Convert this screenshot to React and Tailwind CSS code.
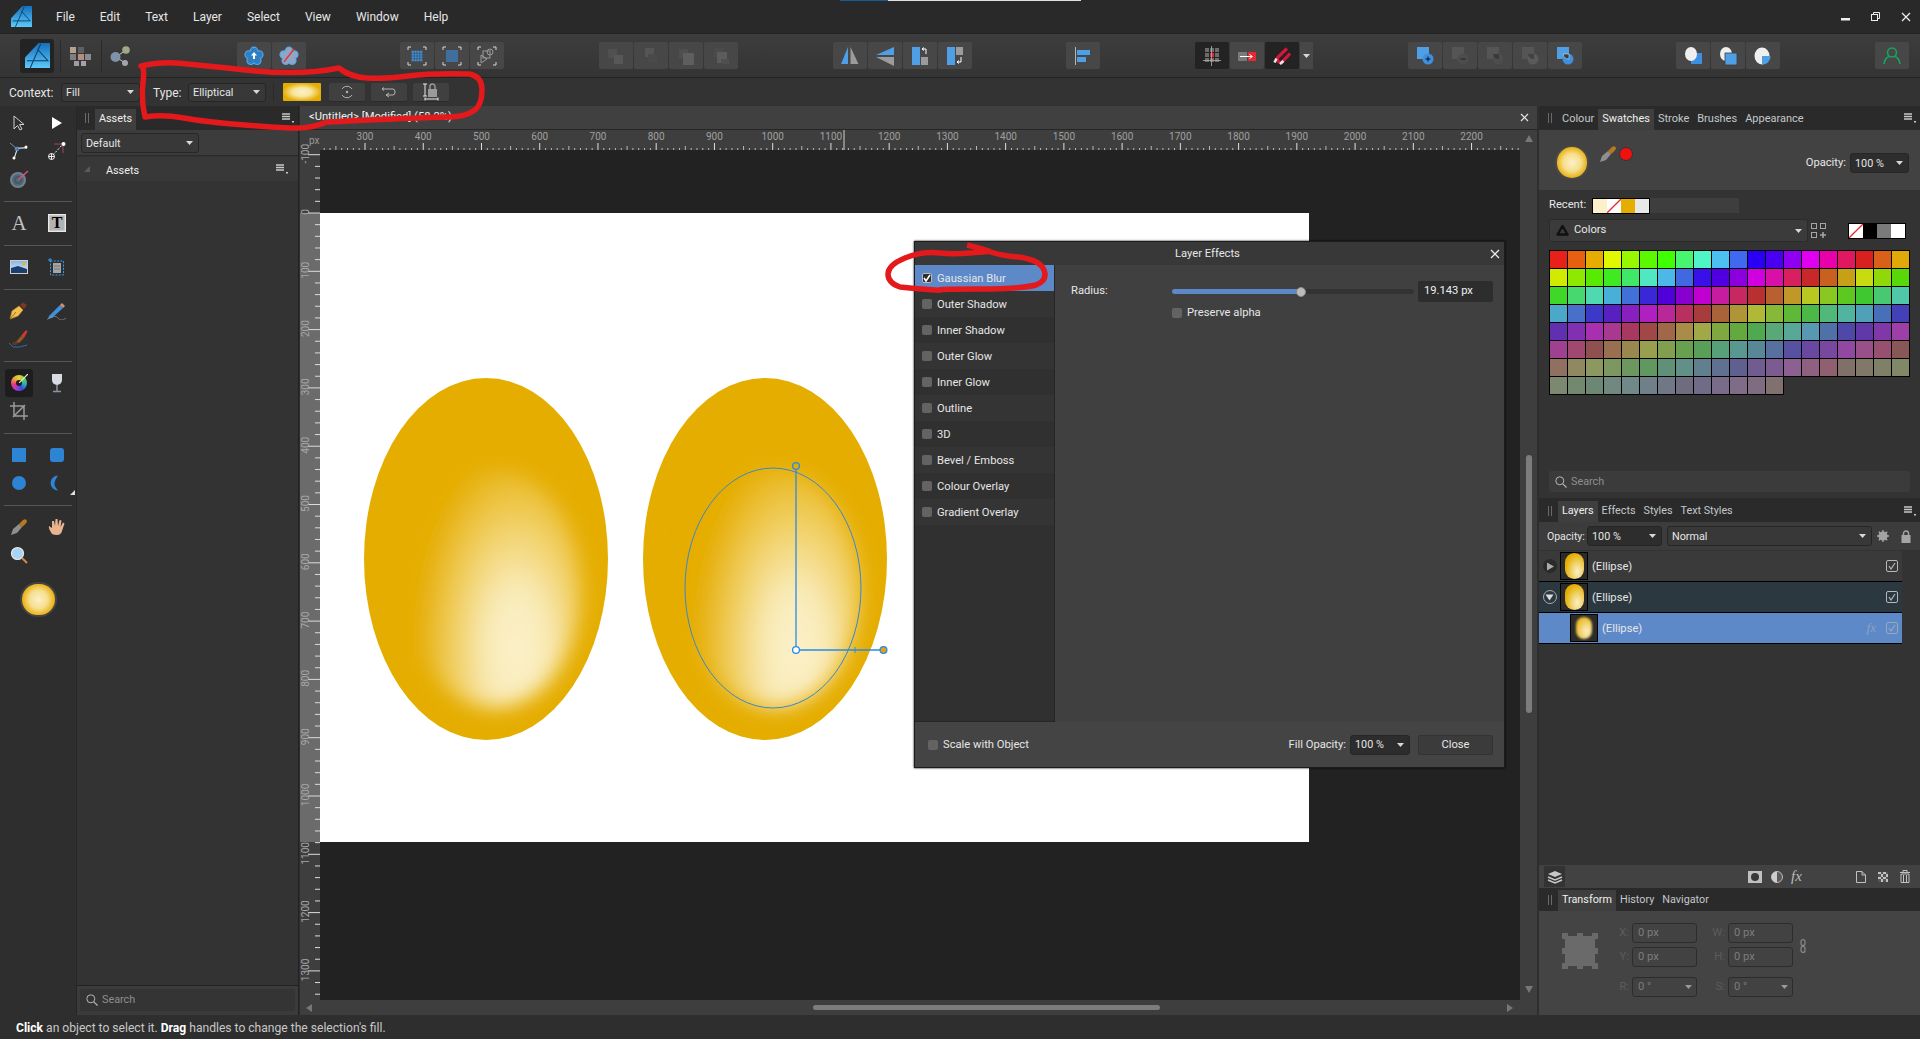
import React from "react";

const FONT = "font-['Roboto','Liberation_Sans',sans-serif]";
const Sv = ({ w = 20, h = 20, vb, children, className = "" }) => (
  <svg width={w} height={h} viewBox={vb || `0 0 ${w} ${h}`} className={"shrink-0 " + className}>{children}</svg>
);

const Caret = ({ c = "#d8d8d8" }) => (
  <Sv w={7} h={4} className="shrink-0"><path d="M0 0H7L3.5 4Z" fill={c} /></Sv>
);
const MenuLines = () => (
  <Sv w={12} h={10}>
    <path d="M0 1H8M0 3.5H8M0 6H8" stroke="#c8c8c8" strokeWidth="1.6" />
    <rect x="10" y="8" width="2" height="1.5" fill="#c8c8c8" />
  </Sv>
);
const Grip = () => (
  <div className="flex gap-[2px] h-[10px]">
    <div className="w-[1px] bg-[#6a6a6a]" />
    <div className="w-[1px] bg-[#6a6a6a]" />
  </div>
);

const Drop = ({ label, className = "", dark = false }) => (
  <div className={`flex items-center justify-between pl-[4px] pr-[5px] rounded-[3px] border border-[#262626] text-[#e6e6e6] text-[10.8px] ${dark ? "bg-[#2d2d2d]" : "bg-[#383838]"} ${className}`}>
    <span className="pt-[2px]">{label}</span>
    <Caret />
  </div>
);

const Logo = ({ s = 22, id = "lg" }) => (
  <Sv w={s} h={s} vb="0 0 24 24">
    <defs>
      <linearGradient id={id} x1="0" y1="0" x2="0" y2="1">
        <stop offset="0" stopColor="#156fbd" />
        <stop offset="1" stopColor="#5cc9f7" />
      </linearGradient>
    </defs>
    <path d="M13 0H24V24H0V14Z" fill={`url(#${id})`} />
    <path d="M15 1L5 24M12 6L22 17L2 17" stroke="#0c3d6b" strokeWidth="1" fill="none" />
  </Sv>
);

const lobes = [[10, 5], [15.2, 8.6], [13.2, 14.6], [6.8, 14.6], [4.8, 8.6]];
const Flower = ({ slash }) => (
  <Sv>
    {lobes.map(([x, y], i) => <circle key={i} cx={x} cy={y} r="4.4" fill="#58a6ea" />)}
    {lobes.map(([x, y], i) => <circle key={i} cx={x} cy={y} r="3.3" fill={slash ? "#8fa6c4" : "#2f7fc4"} />)}
    <circle cx="10" cy="10" r="4.5" fill={slash ? "#8fa6c4" : "#2f7fc4"} />
    {slash ? <path d="M5 16L15 3" stroke="#ee2f2f" strokeWidth="1.3" /> : <path d="M10 6L13 9.5H11V13H9V9.5H7Z" fill="#fff" />}
  </Sv>
);
const Corners = () => (
  <path d="M1 4V1H4M16 1H19V4M19 16V19H16M4 19H1V16" stroke="#d8d8d8" strokeWidth="1" fill="none" />
);
const Sel1 = ({ n = 4, sz = 2.2, step = 2.8 }) => {
  const arr = [];
  for (let i = 0; i < n; i++) for (let j = 0; j < n; j++) arr.push([i, j]);
  const o = 10 - ((n - 1) * step + sz) / 2;
  return (
    <Sv>
      <Corners />
      {arr.map(([i, j]) => <rect key={i + "-" + j} x={o + i * step} y={o + j * step} width={sz} height={sz} fill="#3d8fe0" />)}
    </Sv>
  );
};
const Sel3 = () => (
  <Sv>
    <Corners />
    <circle cx="13" cy="6" r="3" fill="none" stroke="#9a9a9a" />
    <rect x="6" y="5" width="7" height="7" fill="none" stroke="#9a9a9a" />
    <path d="M4 9L10 13L4 17Z" fill="none" stroke="#9a9a9a" />
  </Sv>
);
const Arrange = ({ v }) => {
  const a = [[2, 3, 9, 9, "#505050"], [8, 9, 9, 9, "#575757"]];
  const b = [[3, 3, 9, 9, "#4f4f4f"], [7, 7, 11, 12, "#5e5e5e"]];
  const c = [[3, 2, 9, 9, "#4b4b4b"], [6, 6, 10, 11, "#5c5c5c"], [10, 13, 8, 5, "#4f4f4f"]];
  const d = [a, b, c, [[4, 2, 9, 9, "#555"], [7, 8, 9, 9, "#4a4a4a"]]][v];
  return <Sv>{d.map((r, i) => <rect key={i} x={r[0]} y={r[1]} width={r[2]} height={r[3]} fill={r[4]} />)}</Sv>;
};
const FlipH = () => <Sv><path d="M1 18L8 18V1Z" fill="#4f9fe6" /><path d="M10.5 1V18H18.5Z" fill="#9b9b9b" /></Sv>;
const FlipV = () => <Sv><path d="M19 1V9H1Z" fill="#4f9fe6" /><path d="M1 11H19V20Z" fill="#9b9b9b" /></Sv>;
const RotL = () => (
  <Sv>
    <rect x="2" y="1" width="8" height="18" fill="#4f9fe6" />
    <rect x="11" y="11" width="7" height="8" fill="#9b9b9b" />
    <path d="M12 3H16V8M12 3L14 1.5M12 3L14 4.5" stroke="#fff" strokeWidth="1" fill="none" />
  </Sv>
);
const RotR = () => (
  <Sv>
    <rect x="2" y="1" width="8" height="18" fill="#4f9fe6" />
    <rect x="11" y="1" width="7" height="8" fill="#9b9b9b" />
    <path d="M16 11V16H12M12 16L14 14.5M12 16L14 17.5" stroke="#fff" strokeWidth="1" fill="none" />
  </Sv>
);
const AlignL = () => (
  <Sv>
    <path d="M2.5 1V19" stroke="#b5b5b5" />
    <rect x="4" y="4" width="13" height="5" fill="#4f9fe6" />
    <rect x="4" y="11" width="9" height="5" fill="#4f9fe6" />
  </Sv>
);
const SnapGrid = () => (
  <Sv>
    {[3, 8, 13].map((x) => [2, 7, 12].map((y) => (
      <rect key={x + "," + y} x={x} y={y} width="4" height="4" fill={x === 8 && y === 7 ? "#e8282c" : "#6c6c6c"} />
    )))}
    <path d="M9.5 0V20M1 14.5H19" stroke="#b0b0b0" strokeWidth="0.8" />
  </Sv>
);
const SnapArrow = () => (
  <Sv>
    <rect x="1" y="6" width="9" height="9" fill="#7a7a7a" />
    <rect x="11" y="6" width="8" height="9" fill="#e8282c" />
    <path d="M3 10.5H15M12.5 8.5L15.5 10.5L12.5 12.5" stroke="#fff" fill="none" />
  </Sv>
);
const Magnet = () => (
  <Sv>
    <path d="M15 2.5L6 11A3.2 3.2 0 0 0 10.5 15.5L18 7.5" stroke="#d4173a" strokeWidth="3.2" fill="none" />
    <path d="M4.5 12.5L2.5 16.5M11.5 15L8 18" stroke="#e8e8e8" strokeWidth="2.6" />
  </Sv>
);
const Boolean1 = () => (
  <Sv><rect x="2" y="1" width="12" height="12" fill="#4f9fe6" /><circle cx="13" cy="13" r="5.5" fill="#3d8fe0" /><path d="M10.5 13H15.5M13 10.5V15.5" stroke="#111" /></Sv>
);
const Boolean2 = () => (
  <Sv><rect x="2" y="1" width="12" height="12" fill="#555" /><circle cx="13" cy="13" r="5.5" fill="#4d4d4d" /><path d="M10.5 13H15.5" stroke="#222" /></Sv>
);
const Boolean3 = () => (
  <Sv><rect x="2" y="1" width="12" height="12" fill="#555" /><circle cx="13" cy="13" r="5.5" fill="#4d4d4d" /><path d="M8 8H14V13A6 6 0 0 1 8 8Z" fill="#3a3a3a" /></Sv>
);
const Boolean4 = () => (
  <Sv><rect x="2" y="1" width="12" height="12" fill="#555" /><circle cx="13" cy="13" r="5.5" fill="#5a5a5a" /><path d="M8 8H14V13A6 6 0 0 1 8 8Z" fill="#414141" /></Sv>
);
const Boolean5 = () => (
  <Sv><rect x="2" y="1" width="12" height="12" fill="#4f9fe6" /><circle cx="13" cy="13" r="5.5" fill="#3d8fe0" /><path d="M8 8H14V13A6 6 0 0 1 8 8Z" fill="#3c3c3c" stroke="#dcdcdc" strokeWidth="0.6" /></Sv>
);
const Order1 = () => <Sv><rect x="8" y="7" width="11" height="11" fill="#3d8fe0" /><ellipse cx="8" cy="8" rx="6" ry="7" fill="#efefef" /></Sv>;
const Order2 = () => <Sv><ellipse cx="8" cy="8" rx="6" ry="7" fill="#efefef" /><rect x="7" y="7" width="12" height="12" fill="#4f9fe6" stroke="#3c3c3c" strokeWidth="0.8" /></Sv>;
const Order3 = () => <Sv><ellipse cx="9" cy="10" rx="7.5" ry="8.5" fill="#efefef" /><path d="M9 10H17.5A8 8 0 0 1 9 18.5Z" fill="#4f9fe6" /></Sv>;
const User = () => (
  <Sv><circle cx="10" cy="6.5" r="4.5" fill="none" stroke="#17a25f" strokeWidth="1.6" /><path d="M2 18Q3 11.5 7 10.5M18 18Q17 11.5 13 10.5" fill="none" stroke="#17a25f" strokeWidth="1.6" /></Sv>
);

const Btn = ({ children, dark }) => (
  <div className={`w-[34px] h-[27px] flex items-center justify-center rounded-[2px] ${dark ? "bg-[#232323]" : "bg-[#474747]"}`}>{children}</div>
);
const Grp = ({ className = "", children }) => <div className={`flex gap-[1px] ${className}`}>{children}</div>;

const Toolbar = () => (
  <div className="h-[45px] shrink-0 flex items-center pl-[20px] bg-gradient-to-b from-[#3d3d3d] to-[#343434] border-t border-[#222] border-b border-b-[#232323]">
    <div className="w-[34px] h-[34px] bg-[#232323] rounded-[3px] flex items-center justify-center"><Logo s={25} id="lg2" /></div>
    <div className="ml-[6px] w-[1px] h-[32px] bg-[#2a2a2a]" />
    <div className="ml-[9px]">
      <Sv w={21} h={20}>
        <rect x="0" y="1" width="6" height="6" fill="#b79f90" /><rect x="8" y="1" width="6" height="6" fill="#5f5f5f" />
        <rect x="0" y="8" width="6" height="6" fill="#7f7f7f" /><rect x="8" y="8" width="6" height="6" fill="#b0907f" /><rect x="15" y="8" width="6" height="6" fill="#8b8b8b" />
        <rect x="4" y="15" width="5" height="5" fill="#a49aa5" /><rect x="11" y="15" width="5" height="5" fill="#a8a0b0" />
      </Sv>
    </div>
    <div className="ml-[10px] w-[1px] h-[32px] bg-[#2a2a2a]" />
    <div className="ml-[8px]">
      <Sv w={20} h={20}>
        <path d="M6 11L16 4M6 11L15 17" stroke="#c8c8c8" />
        <circle cx="5.5" cy="11" r="5" fill="#7d93a8" /><circle cx="16" cy="4" r="3.8" fill="#a0a888" /><circle cx="15" cy="17" r="3" fill="#a3a3b3" />
      </Sv>
    </div>
    <Grp className="ml-[107px]"><Btn><Flower /></Btn><Btn><Flower slash /></Btn></Grp>
    <Grp className="ml-[94px]"><Btn><Sel1 /></Btn><Btn><Sel1 n={6} sz={1.5} step={2} /></Btn><Btn><Sel3 /></Btn></Grp>
    <Grp className="ml-[95px]"><Btn><Arrange v={0} /></Btn><Btn><Arrange v={3} /></Btn><Btn><Arrange v={1} /></Btn><Btn><Arrange v={2} /></Btn></Grp>
    <Grp className="ml-[95px]"><Btn><FlipH /></Btn><Btn><FlipV /></Btn><Btn><RotL /></Btn><Btn><RotR /></Btn></Grp>
    <Grp className="ml-[94px]"><Btn><AlignL /></Btn></Grp>
    <Grp className="ml-[95px]">
      <Btn dark><SnapGrid /></Btn><Btn><SnapArrow /></Btn><Btn dark><Magnet /></Btn>
      <div className="w-[13px] h-[27px] bg-[#474747] flex items-center justify-center"><Caret /></div>
    </Grp>
    <Grp className="ml-[95px]"><Btn><Boolean1 /></Btn><Btn><Boolean2 /></Btn><Btn><Boolean3 /></Btn><Btn><Boolean4 /></Btn><Btn><Boolean5 /></Btn></Grp>
    <Grp className="ml-[94px]"><Btn><Order1 /></Btn><Btn><Order2 /></Btn><Btn><Order3 /></Btn></Grp>
    <Grp className="ml-[95px]"><Btn><User /></Btn></Grp>
  </div>
);

const CtxBtn = ({ children }) => (
  <div className="w-[36px] h-[19px] bg-[#404040] rounded-[2px] border-b border-[#2a2a2a] flex items-center justify-center">{children}</div>
);

const ContextBar = () => (
  <div className="h-[28px] shrink-0 flex items-center bg-[#333333] pl-[9px] text-[12px] text-[#e6e6e6]">
    <span className="w-[52px] pt-[1px]">Context:</span>
    <Drop label="Fill" className="w-[79px] h-[19px]" />
    <span className="ml-[13px] w-[35px] pt-[1px]">Type:</span>
    <Drop label="Elliptical" className="w-[78px] h-[19px]" />
    <div className="ml-[7px] w-[1px] h-[19px] bg-[#2a2a2a]" />
    <div className="ml-[9px] w-[38px] h-[18px] rounded-[1px] bg-[radial-gradient(ellipse_at_center,#fbf0c9_0%,#f8e59c_35%,#e5ad00_72%)]" />
    <div className="ml-[8px] flex gap-[6px]">
      <CtxBtn>
        <Sv w={16} h={16}>
          <path d="M3 5A6 6 0 0 1 13 5M3 11A6 6 0 0 0 13 11" fill="none" stroke="#b5b5b5" />
          <circle cx="8" cy="8" r="1.2" fill="#b5b5b5" />
        </Sv>
      </CtxBtn>
      <CtxBtn>
        <Sv w={16} h={14}>
          <path d="M1 4H12Q14 4 14 7Q14 10 12 10H5M5 10L8 8M5 10L8 12" fill="none" stroke="#b5b5b5" />
          <path d="M1 4L3 2.5M1 4L3 5.5" stroke="#b5b5b5" />
        </Sv>
      </CtxBtn>
      <CtxBtn>
        <Sv w={18} h={18}>
          <path d="M1 1H5M3 1V13M1 13H5" stroke="#e8e8e8" />
          <rect x="6" y="6" width="9" height="8" fill="#9a9a9a" />
          <path d="M8 6V3.5A2.5 2.5 0 0 1 13 3.5V6" stroke="#9a9a9a" strokeWidth="1.4" fill="none" />
          <path d="M3 16H16M3 14.5V17.5M16 14.5V17.5" stroke="#e8e8e8" />
        </Sv>
      </CtxBtn>
    </div>
  </div>
);

const Tool = ({ children, active }) => (
  <div className="w-[38px] h-[28px] flex items-center justify-center">
    {active ? <div className="w-[28px] h-[28px] bg-[#1d1d1d] rounded-[3px] flex items-center justify-center">{children}</div> : children}
  </div>
);
const ToolSep = () => <div className="mx-[4px] mt-[8px] mb-[7px] h-[1px] bg-[#555555]" />;
const TRow = ({ children }) => <div className="flex">{children}</div>;

const Tools = () => (
  <div className="w-[76px] shrink-0 bg-[#2e2e2e] pt-[3px]">
    <TRow>
      <Tool><Sv w={16} h={16}><path d="M3 1L3 14L6.5 10.5L9 15L11 14L8.5 9.5L13 9.5Z" fill="#2e2e2e" stroke="#cfcfcf" /></Sv></Tool>
      <Tool><Sv w={16} h={16}><path d="M3 2V14L13 8Z" fill="#fff" /></Sv></Tool>
    </TRow>
    <TRow>
      <Tool>
        <Sv w={20} h={20}>
          <path d="M1 2L8 8L18 6M8 8L5 18" fill="none" stroke="#7d8f9f" />
          <path d="M9 7H18M8 9L5 18" stroke="#fff" strokeWidth="0.8" />
          <circle cx="8" cy="8" r="1.8" fill="none" stroke="#4aa0e6" /><circle cx="17" cy="6" r="1.5" fill="#fff" /><circle cx="5" cy="17" r="1.5" fill="#fff" />
        </Sv>
      </Tool>
      <Tool>
        <Sv w={20} h={20}>
          <path d="M6 14L16 3" stroke="#eee" strokeDasharray="2 1.5" />
          <path d="M16 3H7M16 3V12" stroke="#a54467" />
          <circle cx="16.5" cy="3" r="2" fill="#fff" />
          <circle cx="4.5" cy="15.5" r="3" fill="none" stroke="#eee" /><path d="M4.5 12.5V18.5M1.5 15.5H7.5" stroke="#eee" />
        </Sv>
      </Tool>
    </TRow>
    <TRow>
      <Tool>
        <Sv w={20} h={20}>
          <circle cx="9" cy="11" r="8" fill="#7b7f84" /><circle cx="9" cy="11" r="6" fill="#3e6e8e" /><circle cx="9" cy="11" r="4" fill="#555" /><circle cx="9" cy="11" r="2" fill="#3e6e8e" />
          <path d="M9 11L19 2" stroke="#d8527e" strokeWidth="1.5" />
        </Sv>
      </Tool>
      <Tool />
    </TRow>
    <ToolSep />
    <TRow>
      <Tool><span className="font-['Liberation_Serif',serif] text-[21px] leading-none text-[#c2c2c2]">A</span></Tool>
      <Tool>
        <div className="w-[18px] h-[18px] bg-[#c6c6c6] border border-[#e8e8e8] flex items-center justify-center">
          <div className="w-[14px] h-[14px] bg-[#b2b2b2] flex items-center justify-center font-['Liberation_Serif',serif] text-[16px] leading-none font-bold text-black">T</div>
        </div>
      </Tool>
    </TRow>
    <ToolSep />
    <TRow>
      <Tool>
        <Sv w={18} h={14}>
          <defs><linearGradient id="sky" x1="0" y1="0" x2="0" y2="1"><stop offset="0" stopColor="#86b7e6" /><stop offset="1" stopColor="#e4eef8" /></linearGradient></defs>
          <rect width="18" height="14" fill="#cfcfcf" />
          <rect x="1" y="1" width="16" height="12" fill="url(#sky)" />
          <path d="M1 8L8 6L17 9V13H1Z" fill="#1c3e6c" />
          <rect x="12" y="2.5" width="3" height="3" fill="#e6b62a" />
        </Sv>
      </Tool>
      <Tool>
        <Sv w={18} h={18}>
          <rect x="2.5" y="3" width="13" height="14" fill="none" stroke="#3d9be8" strokeDasharray="2 1.3" />
          <path d="M0 2H4M2 0V4" stroke="#3d9be8" />
          <rect x="5" y="5" width="8" height="10" fill="#a5a5a5" />
          <path d="M6 8H12M6 11H12" stroke="#777" />
        </Sv>
      </Tool>
    </TRow>
    <ToolSep />
    <TRow>
      <Tool>
        <Sv w={20} h={18}>
          <path d="M1 17L3 9L10 4L14 8L9 14Z" fill="#efbf52" stroke="#d08a20" strokeWidth="0.6" />
          <path d="M1 17L7 10" stroke="#7a4a10" strokeWidth="0.7" />
          <path d="M11 3L14 0.5L18 3L15 7Z" fill="#7a3a22" />
        </Sv>
      </Tool>
      <Tool>
        <Sv w={20} h={18}>
          <path d="M2 14L13 3L16 6L5 16L1 17Z" fill="#3d8fe0" />
          <path d="M13 3L15 1L18 4L16 6Z" fill="#e08a6a" />
          <path d="M0 17.5Q8 12 11 16T19 16" fill="none" stroke="#9a9a9a" strokeWidth="0.6" />
        </Sv>
      </Tool>
    </TRow>
    <TRow>
      <Tool>
        <Sv w={20} h={20}>
          <path d="M7 13L12 7L15 9L10 14Z" fill="#8f5a2a" />
          <path d="M12 7L17 1L18.5 2.5L15 9Z" fill="#d4382f" />
          <path d="M3 14Q6 11 9 14Q7 17 4 16Z" fill="#5d3a1f" />
          <path d="M0 14L4 18Q10 19 18 16" fill="none" stroke="#2a6db0" />
        </Sv>
      </Tool>
      <Tool />
    </TRow>
    <ToolSep />
    <TRow>
      <Tool active>
        <div className="relative w-[16px] h-[16px] rounded-full bg-[conic-gradient(#e8d13a,#6ad13a,#2aa8c8,#3a4ad8,#a83ad8,#e83a7a,#e8a03a,#e8d13a)]">
          <div className="absolute left-[5px] top-[5px] w-[6px] h-[6px] rounded-full bg-[#1d1d1d]" />
          <div className="absolute left-[8px] -top-[1px]">
            <Sv w={9} h={9}><path d="M0 9L9 0" stroke="#f0f0f0" strokeWidth="1.2" /></Sv>
          </div>
        </div>
      </Tool>
      <Tool>
        <Sv w={12} h={20}>
          <path d="M1 1H11V7A5 5 0 0 1 1 7Z" fill="#d8dce2" />
          <path d="M6 12V18M2 18.5H10" stroke="#8a93a0" strokeWidth="1.5" />
        </Sv>
      </Tool>
    </TRow>
    <TRow>
      <Tool>
        <Sv w={18} h={18}>
          <path d="M0 4H14V18M4 0V14H18M3 15L15 3" fill="none" stroke="#9a9a9a" strokeWidth="1.5" />
        </Sv>
      </Tool>
      <Tool />
    </TRow>
    <ToolSep />
    <TRow>
      <Tool><div className="w-[14px] h-[14px] bg-[#2d84d4]" /></Tool>
      <Tool><div className="w-[14px] h-[14px] rounded-[3px] bg-[#2d84d4]" /></Tool>
    </TRow>
    <TRow>
      <Tool><div className="w-[14px] h-[14px] rounded-full bg-[#2d84d4]" /></Tool>
      <Tool>
        <div className="relative w-[38px] h-[28px] flex items-center justify-center">
          <Sv w={14} h={16}><path d="M8 0.5A7.5 7.5 0 0 0 8 15.5Q4 11 4.5 8T8 0.5Z" fill="#2d84d4" /></Sv>
          <div className="absolute right-[1px] bottom-[2px]"><Sv w={5} h={5}><path d="M5 0V5H0Z" fill="#e0e0e0" /></Sv></div>
        </div>
      </Tool>
    </TRow>
    <ToolSep />
    <TRow>
      <Tool>
        <Sv w={18} h={18}>
          <path d="M1 17L3 11L9 6L12 9L7 15Z" fill="#8f8f8f" />
          <path d="M9 6L13 2Q16 0 17 3Q17 5 12 9Z" fill="#b5791f" />
        </Sv>
      </Tool>
      <Tool>
        <Sv w={18} h={18}>
          <path d="M4 16Q0 10 1 8L4 10L4 3L6 3L7 8L7.5 1L9.5 1L10 8L11.5 2L13.5 2.5L12.5 9L15 4.5L16.5 5.5L14 13Q13 17 9 17Q6 17 4 16Z" fill="#eab28f" />
        </Sv>
      </Tool>
    </TRow>
    <TRow>
      <Tool>
        <Sv w={18} h={18}>
          <circle cx="7.5" cy="7.5" r="6" fill="#a7d4f5" stroke="#e8e8e8" strokeWidth="1.2" />
          <path d="M12 12L17 17" stroke="#d08a4a" strokeWidth="2" />
        </Sv>
      </Tool>
      <Tool />
    </TRow>
    <div className="mt-[13px] flex justify-center">
      <div className="w-[37px] h-[35px] rounded-full bg-[#444444] flex items-center justify-center">
        <div className="w-[33px] h-[31px] rounded-full bg-[radial-gradient(circle,#fbf0c9_0%,#f7df8e_40%,#e8b010_72%)]" />
      </div>
    </div>
  </div>
);

const Tabs = ({ items, active, className = "", menu = true }) => (
  <div className={`flex items-end shrink-0 bg-[#2a2a2a] pr-[4px] ${className}`}>
    <div className="self-center"><Grip /></div>
    <div className="ml-[6px] flex h-[21px] flex-1">
      {items.map((t) => (
        <div key={t} className={`px-[4px] flex items-center ${t === active ? "bg-[#3f3f3f] text-[#f0f0f0]" : "text-[#c2c8cc]"}`}>{t}</div>
      ))}
    </div>
    {menu && <div className="self-center"><MenuLines /></div>}
  </div>
);

const SearchField = ({ className = "" }) => (
  <div className={`flex items-center gap-[4px] rounded-[2px] pl-[6px] text-[10.8px] text-[#8f8f8f] ${className}`}>
    <Sv w={12} h={12}><circle cx="4.8" cy="4.8" r="4" fill="none" stroke="#b5b5b5" /><path d="M7.8 7.8L11.5 11.5" stroke="#b5b5b5" strokeWidth="1.2" /></Sv>
    <span className="pt-[1px]">Search</span>
  </div>
);

const Assets = () => (
  <div className="w-[223px] shrink-0 flex flex-col border-r border-[#222] border-l border-l-[#262626] bg-[#333333]">
    <Tabs items={["Assets"]} active="Assets" className="h-[24px] pl-[8px] text-[10.8px]" />
    <div className="h-[26px] shrink-0 bg-[#3c3c3c] pl-[4px] pt-[3px] border-b border-[#2a2a2a]">
      <Drop label="Default" className="w-[118px] h-[20px]" />
    </div>
    <div className="mt-[1px] h-[24px] shrink-0 bg-[#383838] flex items-center pl-[6px] pr-[10px] text-[10.8px] text-[#f0f0f0]">
      <Sv w={8} h={8}><path d="M7 1V7H1Z" fill="#5a5a5a" /></Sv>
      <span className="ml-[15px] flex-1 pt-[4px]">Assets</span>
      <MenuLines />
    </div>
    <div className="flex-1" />
    <div className="h-[30px] shrink-0 bg-[#3b3b3b] border-t border-[#222] px-[3px] pt-[3px]">
      <SearchField className="h-[22px] bg-[#343434]" />
    </div>
  </div>
);

const hLabels = Array.from({ length: 20 }, (_, i) => 300 + i * 100);

const HRuler = () => {
  const ticks = [];
  for (let i = -8; i < 206; i++) {
    const x = 45 + i * 5.824;
    const m = ((i % 10) + 10) % 10;
    ticks.push(<path key={i} d={`M${x} 20V${m === 0 ? 13 : m === 5 ? 16 : 18}`} stroke={m === 0 ? "#e0e0e0" : "#b8b8b8"} strokeWidth="1" />);
  }
  return (
    <svg width={1200} height={20} className="block">
      {ticks}
      <path d="M524 0V20" stroke="#d0d0d0" />
      {hLabels.map((v, i) => (
        <text key={v} x={45 + i * 58.24} y={10} textAnchor="middle" fontSize="10" fill="#a0a0a0" fontFamily="Roboto, sans-serif">{v}</text>
      ))}
    </svg>
  );
};

const VRuler = () => {
  const ticks = [];
  for (let i = -5; i < 68; i++) {
    const y = 63 + i * 11.66;
    const major = ((i % 5) + 5) % 5 === 0;
    ticks.push(<path key={i} d={`M${major ? 8 : 15} ${y}H20`} stroke="#dcdcdc" />);
  }
  const labels = [-100, 0, 100, 200, 300, 400, 500, 600, 700, 800, 900, 1000, 1100, 1200, 1300];
  return (
    <svg width={20} height={850} className="block overflow-visible relative">
      <rect x="0" y="63" width="20" height="629" fill="#6b6b6b" />
      {ticks}
      {labels.map((v) => {
        const y = 63 + (v / 100) * 58.3 - 1;
        return <text key={v} transform={`translate(9 ${y}) rotate(-90)`} textAnchor="middle" fontSize="10" fill="#a8a8a8" fontFamily="Roboto, sans-serif">{v}</text>;
      })}
    </svg>
  );
};

const Check = ({ on, className = "" }) => (
  <div className={`w-[10px] h-[10px] rounded-[2px] flex items-center justify-center shrink-0 ${on ? "bg-[#2d2d2d] border border-[#bbb]" : "bg-[#636363]"} ${className}`}>
    {on && <Sv w={8} h={8}><path d="M1 4L3 7L7 1" fill="none" stroke="#fff" strokeWidth="1.6" /></Sv>}
  </div>
);

const fx = ["Gaussian Blur", "Outer Shadow", "Inner Shadow", "Outer Glow", "Inner Glow", "Outline", "3D", "Bevel / Emboss", "Colour Overlay", "Gradient Overlay"];

const Dialog = () => (
  <div className="absolute left-[914px] top-[241px] w-[591px] h-[527px] flex flex-col bg-[#404040] border border-[#1c1c1c] text-[11.2px] text-[#e6e6e6] shadow-[0_0_2px_#000]">
    <div className="h-[23px] bg-[#383838] flex items-center relative shrink-0">
      <span className="absolute left-[260px] pt-[2px] text-[#e6e6e6]">Layer Effects</span>
      <div className="absolute right-[4px] top-[7px]"><Sv w={10} h={10}><path d="M1 1L9 9M9 1L1 9" stroke="#eee" strokeWidth="1.3" /></Sv></div>
    </div>
    <div className="flex flex-1 min-h-0">
      <div className="w-[140px] bg-[#303030] border-r border-[#262626] border-b border-b-[#262626] shrink-0">
        {fx.map((t, i) => (
          <div key={t} className={`h-[26px] flex items-center pl-[7px] gap-[5px] ${i === 0 ? "bg-[#5d89c9]" : i % 2 ? "bg-[#343434]" : "bg-[#303030]"}`}>
            <Check on={i === 0} />
            <span className="pt-[2px]">{t}</span>
          </div>
        ))}
      </div>
      <div className="flex-1 pl-[16px] pr-[11px] pt-[16px]">
        <div className="flex items-center h-[21px]">
          <span className="w-[101px]">Radius:</span>
          <div className="relative w-[242px] h-[5px] rounded-full bg-[#333333]">
            <div className="h-full w-[129px] rounded-full bg-[#5d89c9]" />
            <div className="absolute left-[124px] -top-[2px] w-[10px] h-[10px] rounded-full bg-[#bcbcbc] border border-[#888]" />
          </div>
          <div className="ml-[4px] w-[75px] h-[21px] bg-[#2d2d2d] rounded-[2px] flex items-center pl-[6px] text-[#f0f0f0]">19.143 px</div>
        </div>
        <div className="flex items-center gap-[5px] ml-[101px] mt-[2px]">
          <Check />
          <span className="pt-[1px]">Preserve alpha</span>
        </div>
      </div>
    </div>
    <div className="h-[45px] bg-[#444444] flex items-center pl-[13px] pr-[11px] shrink-0">
      <Check />
      <span className="ml-[5px] pt-[2px]">Scale with Object</span>
      <span className="ml-auto pt-[2px]">Fill Opacity:</span>
      <Drop label="100 %" dark className="ml-[4px] w-[60px] h-[20px]" />
      <div className="ml-[8px] w-[75px] h-[20px] pt-[2px] bg-[#3b3b3b] border border-[#333] rounded-[2px] flex items-center justify-center">Close</div>
    </div>
  </div>
);

const Handle = ({ x, y, fill }) => (
  <circle cx={x} cy={y} r="3.4" fill={fill} stroke="#2a8ae8" strokeWidth="1.3" />
);

const Stops = () => (
  <>
    <stop offset="0" stopColor="#fbf1cb" />
    <stop offset="0.3" stopColor="#f9ebb8" />
    <stop offset="0.65" stopColor="#f0cd5c" />
    <stop offset="1" stopColor="#e5ad00" />
  </>
);

const Page = () => (
  <div className="absolute left-0 top-[63px] w-[989px] h-[629px] bg-white">
    <svg width={989} height={629} className="block overflow-visible">
      <defs>
        <radialGradient id="rg1" gradientUnits="userSpaceOnUse" cx="0" cy="0" r="1" gradientTransform="translate(197 437) scale(100 205)"><Stops /></radialGradient>
        <radialGradient id="rg2" gradientUnits="userSpaceOnUse" cx="0" cy="0" r="1" gradientTransform="translate(476 437) scale(100 205)"><Stops /></radialGradient>
        <filter id="bl" x="-20%" y="-20%" width="140%" height="140%"><feGaussianBlur stdDeviation="9.5" /></filter>
      </defs>
      <ellipse cx="166" cy="346" rx="122" ry="181" fill="#e5ad00" />
      <ellipse cx="445" cy="346" rx="122" ry="181" fill="#e5ad00" />
      <ellipse cx="174" cy="375" rx="88" ry="120" fill="url(#rg1)" filter="url(#bl)" />
      <ellipse cx="453" cy="375" rx="88" ry="120" fill="url(#rg2)" filter="url(#bl)" />
      <ellipse cx="453" cy="375" rx="88" ry="120" fill="none" stroke="#3a86d0" strokeWidth="1" />
      <path d="M476 253V437H563.5" fill="none" stroke="#2a8ae8" strokeWidth="1.3" />
      <path d="M535 434V440" stroke="#2a8ae8" />
      <Handle x={476} y={253} fill="#e5ad00" />
      <Handle x={476} y={437} fill="#fff" />
      <Handle x={563.5} y={437} fill="#e5a010" />
    </svg>
  </div>
);

const Center = () => (
  <div className="flex-1 min-w-0 flex flex-col ml-[1px] mr-[2px] bg-[#3e3e3e]">
    <div className="h-[24px] shrink-0 flex items-center justify-between pl-[9px] pr-[8px] bg-[#404040] border-b border-[#262626] text-[11.2px] text-[#f0f0f0]">
      <span>&lt;Untitled&gt; [Modified] (58.2%)</span>
      <Sv w={9} h={9}><path d="M1 1L8 8M8 1L1 8" stroke="#e8e8e8" strokeWidth="1.2" /></Sv>
    </div>
    <div className="flex-1 min-h-0 flex">
      <div className="w-[1220px] flex flex-col">
        <div className="h-[20px] flex shrink-0">
          <div className="w-[20px] pl-[9px] pt-[6px] text-[10px] leading-none text-[#9a9a9a]">px</div>
          <HRuler />
        </div>
        <div className="h-[850px] flex shrink-0">
          <div className="w-[20px] shrink-0"><VRuler /></div>
          <div className="relative flex-1 bg-[#222222] overflow-hidden">
            <Page />
          </div>
        </div>
        <div className="flex-1 flex items-center pl-[6px]">
          <Sv w={6} h={8}><path d="M6 0V8L0 4Z" fill="#777" /></Sv>
          <div className="ml-[501px] w-[347px] h-[5px] bg-[#7c7c7c] rounded-full" />
          <div className="ml-auto mr-[7px]"><Sv w={6} h={8}><path d="M0 0V8L6 4Z" fill="#777" /></Sv></div>
        </div>
      </div>
      <div className="flex-1 flex flex-col items-center pt-[5px] pb-[22px] relative">
        <Sv w={8} h={7}><path d="M4 0L8 7H0Z" fill="#777" /></Sv>
        <div className="mt-[313px] w-[6px] h-[258px] bg-[#7c7c7c] rounded-full" />
        <div className="mt-auto"><Sv w={8} h={7}><path d="M4 7L8 0H0Z" fill="#777" /></Sv></div>
      </div>
    </div>
  </div>
);

const swatches = [
  "e8201a e75f10 e8ab00 e2f800 98f800 5cf800 40ff00 48f570 50f5c5 4cc0f0 4069f0 2a00f5 4a00f0 9000f0 e000f0 e800a8 e01860 d82020 d86018 e0a808",
  "d2ea00 8ee800 58ea00 3eea20 40e868 50e8c0 4cb8e8 4068e0 3a10e8 5000e0 8c00e0 d000e0 d810a8 d82060 c82828 c86020 c8a018 c8da10 90d808 58d808",
  "40d828 48d870 50d8b0 48b0d8 4070d8 3a28d8 5000d8 8800d0 c000d0 c81ca0 c82860 b83030 b86030 c09828 b8c820 88c820 5cc820 40c830 48c870 50c8a8",
  "4ca8c8 4870c8 3c38c8 5820c0 8820c0 b020c0 b82898 b83060 a83c3c a86438 b09438 b0b838 88b838 60b838 4cb848 50b878 50b4a0 50a0b8 4870b8 4440b8",
  "6030b0 8030b0 a830b0 a83890 a83860 a04848 a06848 a88c48 a0a848 80a840 64a840 50a850 58a878 58a898 5898b0 5070a8 5048a8 6038a8 8038a8 9c40a8",
  "a04090 a04870 905050 987050 988850 98a050 80a050 68a050 58a058 58a078 589890 588898 5870a0 5850a0 6848a0 7848a0 9048a0 985088 985070 885858",
  "907060 908860 8c9860 7c9860 6c9860 609860 609078 609088 608090 607090 606090 705c90 7c5c90 8c6090 906080 906070 807068 807868 808068 808868",
  "7c8870 748870 6c8874 708880 708888 708088 707888 706c80 706c88 786c88 806c88 806c80 807070",
].join(" ").split(" ");

const None = ({ s = 14 }) => (
  <div className="bg-white" style={{ width: s, height: s }}>
    <Sv w={s} h={s}><path d={`M0 ${s}L${s} 0`} stroke="#e8282c" strokeWidth="1.3" /></Sv>
  </div>
);

const LayerThumb = ({ blur, className = "" }) => (
  <div className={`w-[28px] h-[28px] bg-[#2b2b2b] border border-black flex items-center justify-center shrink-0 ${className}`}>
    {blur
      ? <div className="w-[16px] h-[22px] rounded-full blur-[1px] bg-[radial-gradient(ellipse_at_65%_65%,#fbf0c9_0%,#f0cf62_45%,#e5ad00_90%)]" />
      : <div className="w-[19px] h-[26px] rounded-full bg-[radial-gradient(ellipse_at_65%_72%,#fbf0c9_0%,#f2d676_30%,#e5ad00_70%)]" />}
  </div>
);

const RowCheck = ({ dim }) => (
  <div className={`w-[12px] h-[12px] border rounded-[2px] flex items-center justify-center ${dim ? "border-[#9aa8bc]" : "border-[#b8b8b8]"}`}>
    <Sv w={8} h={8}><path d="M1 4L3 7L7 1" fill="none" stroke={dim ? "#9aa8bc" : "#b8b8b8"} strokeWidth="1.2" /></Sv>
  </div>
);

const Field = ({ label, caret, lw = "w-[28px]" }) => (
  <div className="flex items-center">
    <span className={`${lw} text-right pr-[3px] text-[#5c5c5c]`}>{label}</span>
    <div className="w-[65px] h-[20px] rounded-[3px] border border-[#2c2c2c] bg-[#424242] flex items-center justify-between pl-[5px] pr-[4px] text-[#7d7d7d]">
      <span>{caret || "0 px"}</span>
      {caret && <Caret c="#999" />}
    </div>
  </div>
);

const Right = () => (
  <div className="w-[381px] shrink-0 flex flex-col bg-[#333333] text-[11.2px] text-[#e6e6e6]">
    <Tabs items={["Colour", "Swatches", "Stroke", "Brushes", "Appearance"]} active="Swatches" className="h-[24px] pl-[9px] text-[11px]" />
    <div className="h-[60px] shrink-0 bg-[#424242] flex pl-[16px] pr-[11px]">
      <div className="mt-[16px] w-[34px] h-[33px] rounded-full bg-[#4c4c4c] flex items-center justify-center">
        <div className="w-[30px] h-[31px] rounded-full bg-[radial-gradient(circle,#fbf0c9_0%,#f7df8e_40%,#e8b010_72%)]" />
      </div>
      <div className="ml-[10px] mt-[15px]">
        <Sv w={18} h={18}>
          <path d="M1 17L3 11L9 6L12 9L7 15Z" fill="#8f8f8f" />
          <path d="M9 6L13 2Q16 0 17 3Q17 5 12 9Z" fill="#b5791f" />
        </Sv>
      </div>
      <div className="ml-[2px] mt-[17px] w-[14px] h-[14px] rounded-full bg-[#f01010] border border-[#333]" />
      <span className="ml-auto mt-[26px] leading-[14px]">Opacity:</span>
      <Drop label="100 %" dark className="ml-[4px] mt-[23px] w-[59px] h-[20px]" />
    </div>
    <div className="h-[308px] shrink-0 flex flex-col pl-[10px] pr-[10px]">
      <div className="mt-[8px] h-[15px] flex items-center">
        <span className="w-[43px] -mt-[1px]">Recent:</span>
        <div className="flex border border-black">
          <div className="w-[14px] h-[14px] bg-[#fbf0c9]" />
          <None />
          <div className="w-[14px] h-[14px] bg-[#e5ad00]" />
          <div className="w-[14px] h-[14px] bg-[#e8e8e8]" />
        </div>
        <div className="w-[89px] h-[15px] bg-[#3e3e3e]" />
      </div>
      <div className="mt-[6px] h-[23px] flex items-center">
        <div className="w-[259px] h-[23px] bg-[#3b3b3b] border border-[#2b2b2b] rounded-[2px] flex items-center justify-between pl-[6px] pr-[5px]">
          <div className="flex items-center gap-[5px]">
            <Sv w={13} h={12}><path d="M6.5 2L11.5 10.5H1.5Z" fill="none" stroke="#111" strokeWidth="2.4" strokeLinejoin="round" /></Sv>
            <span>Colors</span>
          </div>
          <Caret />
        </div>
        <div className="ml-[3px]">
          <Sv w={15} h={15}>
            <g fill="none" stroke="#a5a5a5"><rect x="0.5" y="0.5" width="5" height="5" /><rect x="9.5" y="0.5" width="5" height="5" /><rect x="0.5" y="9.5" width="5" height="5" /></g>
            <path d="M12 9V15M9 12H15" stroke="#a5a5a5" strokeWidth="1.6" />
          </Sv>
        </div>
        <div className="ml-[22px] flex border border-black">
          <None s={14} />
          <div className="w-[14px] h-[14px] bg-black" />
          <div className="w-[14px] h-[14px] bg-[#7a7a7a]" />
          <div className="w-[14px] h-[14px] bg-white" />
        </div>
      </div>
      <div className="mt-[8px] grid grid-cols-[repeat(20,18px)] auto-rows-[18px]">
        {swatches.map((c, i) => (
          <div key={i} className="w-[19px] h-[19px] border border-black" style={{ backgroundColor: "#" + c }} />
        ))}
      </div>
      <SearchField className="mt-auto mb-[6px] h-[21px] shrink-0 bg-[#3b3b3b]" />
    </div>
    <div className="h-[2px] bg-[#2a2a2a] shrink-0" />
    <Tabs items={["Layers", "Effects", "Styles", "Text Styles"]} active="Layers" className="h-[22px] pl-[9px] text-[10.8px]" />
    <div className="h-[28px] shrink-0 bg-[#3c3c3c] flex items-center pl-[8px] pr-[9px]">
      <span className="w-[40px] pt-[2px] text-[10.5px]">Opacity:</span>
      <Drop label="100 %" dark className="w-[75px] h-[20px]" />
      <Drop label="Normal" className="ml-[5px] w-[205px] h-[20px]" />
      <div className="ml-[5px]">
        <Sv w={12} h={12}>
          <circle cx="6" cy="6" r="3.4" fill="none" stroke="#a5a5a5" strokeWidth="2.4" />
          <path d="M6 0V12M0 6H12M1.8 1.8L10.2 10.2M10.2 1.8L1.8 10.2" stroke="#a5a5a5" strokeWidth="1.4" />
        </Sv>
      </div>
      <div className="ml-auto">
        <Sv w={10} h={13}><rect x="0.5" y="5" width="9" height="8" fill="#a5a5a5" /><path d="M2.5 5V3.5A2.5 2.5 0 0 1 7.5 3.5V5" fill="none" stroke="#a5a5a5" strokeWidth="1.4" /></Sv>
      </div>
    </div>
    <div className="h-[315px] shrink-0 w-[363px] pt-[1px]">
      <div className="h-[31px] bg-[#3a3a3a] border-b border-black flex items-center">
        <div className="w-[21px] flex justify-center">
          <div className="w-[14px] h-[14px] rounded-full bg-[#2a2a2a] flex items-center justify-center"><Sv w={8} h={9}><path d="M1 0.5L8 4.5L1 8.5Z" fill="#aaa" /></Sv></div>
        </div>
        <LayerThumb />
        <span className="ml-[4px] flex-1 pt-[2px]">(Ellipse)</span>
        <div className="mr-[4px]"><RowCheck /></div>
      </div>
      <div className="h-[31px] bg-[#2b3840] border-b border-black flex items-center">
        <div className="w-[21px] flex justify-center">
          <div className="w-[14px] h-[14px] rounded-full border border-[#aaa] flex items-center justify-center"><Sv w={9} h={7}><path d="M0.5 0.5H8.5L4.5 6.5Z" fill="#ddd" /></Sv></div>
        </div>
        <LayerThumb />
        <span className="ml-[4px] flex-1 pt-[2px]">(Ellipse)</span>
        <div className="mr-[4px]"><RowCheck /></div>
      </div>
      <div className="h-[31px] bg-[#5d89c9] border-b border-black flex items-center">
        <LayerThumb blur className="ml-[31px]" />
        <span className="ml-[4px] flex-1 pt-[2px]">(Ellipse)</span>
        <span className="font-['Liberation_Serif',serif] italic text-[13px] text-[#8ea2bf] mr-[10px]">fx</span>
        <div className="mr-[4px]"><RowCheck dim /></div>
      </div>
    </div>
    <div className="h-[23px] shrink-0 bg-[#424242] flex items-center pl-[5px] pr-[9px]">
      <div className="w-[21px] h-[21px] bg-[#333333] flex items-center justify-center">
        <Sv w={16} h={14}>
          <path d="M1 4L8 1L15 4L8 7Z" fill="#c8c8c8" />
          <path d="M1 7L8 10L15 7M1 10L8 13L15 10" fill="none" stroke="#c8c8c8" strokeWidth="1.4" />
        </Sv>
      </div>
      <div className="ml-[183px]">
        <Sv w={14} h={12}><rect width="14" height="12" fill="#c0c0c0" /><circle cx="7" cy="6" r="4" fill="#383838" /></Sv>
      </div>
      <div className="ml-[9px]">
        <Sv w={12} h={12}><circle cx="6" cy="6" r="5.5" fill="#5a5a5a" stroke="#bbb" /><path d="M6 0.5A5.5 5.5 0 0 0 6 11.5Z" fill="#ccc" /></Sv>
      </div>
      <span className="ml-[8px] w-[16px] font-['Liberation_Serif',serif] italic text-[15px] leading-none text-[#bbbbbb]">fx</span>
      <div className="ml-[49px]">
        <Sv w={10} h={12}><path d="M0.5 0.5H6L9.5 4V11.5H0.5ZM6 0.5V4H9.5" fill="none" stroke="#c0c0c0" /></Sv>
      </div>
      <div className="ml-[12px] grid grid-cols-4 w-[10px] h-[10px] bg-[#c0c0c0]">
        {Array.from({ length: 16 }, (_, i) => (
          <div key={i} className={(i + (i >> 2)) % 2 ? "bg-[#555]" : "bg-[#c0c0c0]"} />
        ))}
      </div>
      <div className="ml-[12px]">
        <Sv w={10} h={13}><path d="M0 2.5H10M3 2.5V0.5H7V2.5" stroke="#c0c0c0" fill="none" /><path d="M1 4H9V12.5H1ZM3.5 5V12M6.5 5V12" fill="none" stroke="#c0c0c0" /></Sv>
      </div>
    </div>
    <Tabs items={["Transform", "History", "Navigator"]} active="Transform" className="h-[23px] pl-[9px] text-[10.8px]" menu={false} />
    <div className="flex-1 bg-[#444444] relative flex pl-[23px] pt-[12px]">
      <div className="mt-[10px] w-[36px] h-[36px] relative shrink-0">
        <Sv w={36} h={36}>
          <rect x="3" y="3" width="30" height="30" fill="#6a6a6a" />
          {[0, 15, 30].map((x) => [0, 15, 30].map((y) => <rect key={x + "," + y} x={x} y={y} width="6" height="6" fill="#6a6a6a" />))}
        </Sv>
      </div>
      <div className="ml-[6px] flex flex-col">
        <div className="flex flex-col gap-[4px]">
          <div className="flex gap-[6px]"><Field label="X:" lw="w-[28px]" /><Field label="W:" lw="w-[25px]" /></div>
          <div className="flex gap-[6px]"><Field label="Y:" lw="w-[28px]" /><Field label="H:" lw="w-[25px]" /></div>
        </div>
        <div className="flex gap-[6px] mt-[10px]"><Field label="R:" caret="0 °" lw="w-[28px]" /><Field label="S:" caret="0 °" lw="w-[25px]" /></div>
      </div>
      <div className="ml-[7px] mt-[16px]">
        <Sv w={6} h={14}><g fill="none" stroke="#8a8a8a" strokeWidth="1.2"><rect x="1" y="0.6" width="4" height="6" rx="2" /><rect x="1" y="7.4" width="4" height="6" rx="2" /></g></Sv>
      </div>
    </div>
  </div>
);

export default function App() {
  return (
    <div className={`relative w-[1920px] h-[1039px] overflow-hidden bg-[#2e2e2e] flex flex-col ${FONT}`}>
      <div className="h-[33px] shrink-0 relative bg-[#292929] flex items-center pl-[11px] text-[12px] text-[#e6e6e6]">
        <Logo s={21} />
        <div className="ml-[24px] flex gap-[25px]">
          {["File", "Edit", "Text", "Layer", "Select", "View", "Window", "Help"].map((m) => <span key={m}>{m}</span>)}
        </div>
        <div className="absolute left-[840px] top-0 w-[48px] h-[1px] bg-[#135a9c]" />
        <div className="absolute left-[888px] top-0 w-[193px] h-[1px] bg-[#e0e0e0]" />
        <div className="ml-auto mr-[9px] flex items-center gap-[21px]">
          <Sv w={9} h={9}><rect x="0" y="6" width="9" height="2.5" fill="#eee" /></Sv>
          <Sv w={9} h={9}><rect x="0.5" y="2.5" width="6" height="6" fill="none" stroke="#eee" /><path d="M2.5 2.5V0.5H8.5V6.5H6.5" fill="none" stroke="#eee" /></Sv>
          <Sv w={10} h={10}><path d="M1 1L9 9M9 1L1 9" stroke="#eee" strokeWidth="1.2" /></Sv>
        </div>
      </div>
      <Toolbar />
      <ContextBar />
      <div className="flex-1 min-h-0 flex">
        <Tools />
        <Assets />
        <Center />
        <Right />
      </div>
      <div className="h-[24px] shrink-0 bg-[#2e2e2e] flex items-center pl-[16px] pt-[3px] text-[12.1px] text-[#c8c8c8]">
        <span><b className="text-white">Click</b> an object to select it. <b className="text-white">Drag</b> handles to change the selection's fill.</span>
      </div>
      <Dialog />
      <svg width={1920} height={1039} className="absolute left-0 top-0 pointer-events-none">
        <path d="M141 66Q160 62 175 63T245 70T339 68Q350 77 367 78T408 76T469 74Q482 76 482 90T475 110Q465 117 449 117T327 122Q312 128 298 128T245 125T184 118T145 117Q141 100 143 83T141 66Z"
          fill="none" stroke="#e3191c" strokeWidth="5.5" strokeLinejoin="round" />
        <path d="M967 245Q980 248 991 252T1019 257Q1040 260 1044 270T1036 285Q1020 289 979 289T940 290T900 287Q888 283 888 274T905 258T940 253T991 251"
          fill="none" stroke="#e3191c" strokeWidth="5.5" strokeLinejoin="round" />
      </svg>
    </div>
  );
}
